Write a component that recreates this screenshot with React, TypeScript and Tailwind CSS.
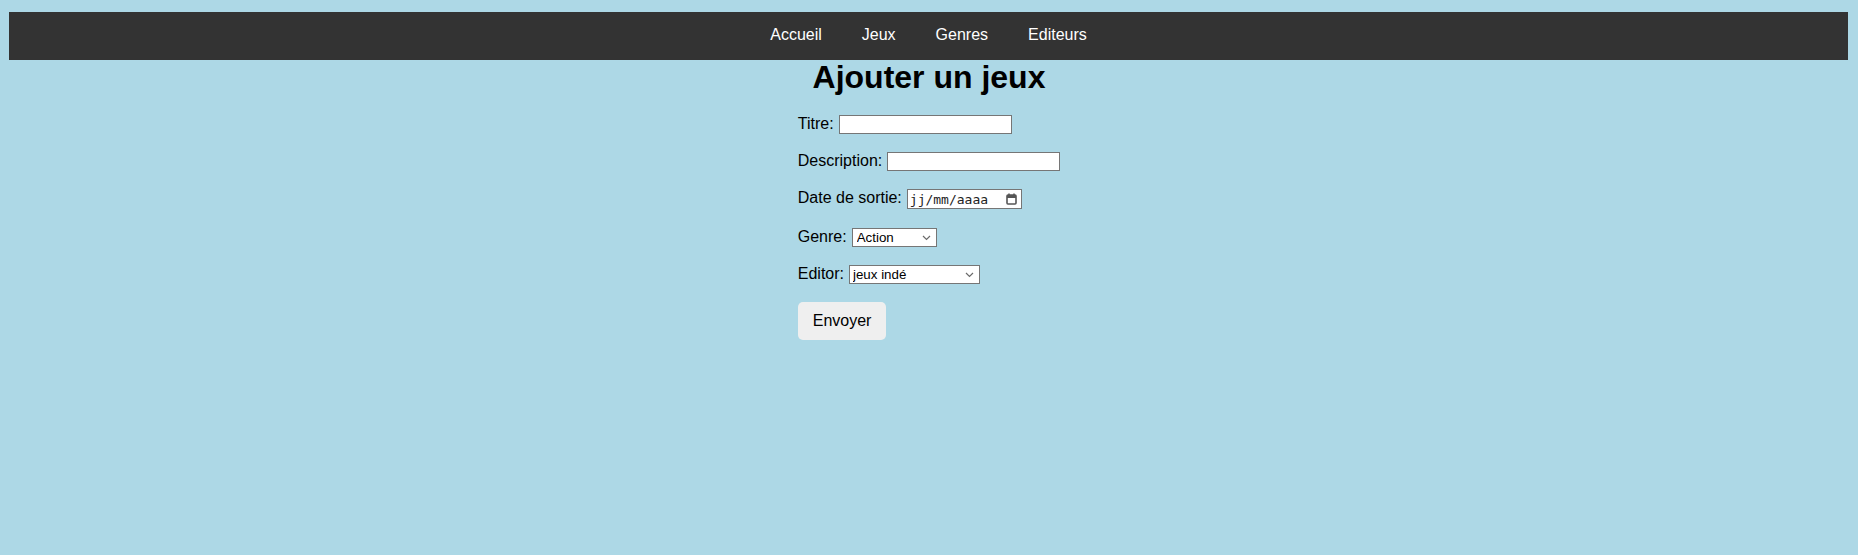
const links = ["Accueil", "Jeux", "Genres", "Editeurs"];

const Chevron = () => (
  <svg
    className="pointer-events-none absolute right-[6px] top-1/2 -translate-y-1/2"
    width="9"
    height="6"
    viewBox="0 0 9 6"
    fill="none"
  >
    <path d="M1 1l3.5 3.5L8 1" stroke="#6b6b6b" strokeWidth="1.2" />
  </svg>
);

const labelCls = "pb-[2px] text-[16px] leading-[18px]";
const inputCls =
  "block h-[19px] w-[173px] border border-[#767676] bg-white px-[2px] py-[1px] text-[13.33px] leading-[15px]";

export default function App() {
  return (
    <div className="min-h-screen bg-[#add8e6] pt-[12px] font-['Liberation_Sans',Arial,sans-serif] text-black">
      {/* Nav */}
      <nav className="ml-[9px] mr-[10px] flex h-[48px] items-center justify-center bg-[#333333]">
        {links.map((link) => (
          <a
            key={link}
            href="#"
            className="px-[20px] pb-[2px] text-[16px] leading-[18px] text-white"
          >
            {link}
          </a>
        ))}
      </nav>

      <h1 className="text-center text-[32px] font-bold leading-[34px]">Ajouter un jeux</h1>

      <div className="mt-[21px] flex justify-center">
        <form className="flex flex-col items-start gap-[18px]" onSubmit={(e) => e.preventDefault()}>
          <div className="flex h-[19px] items-center gap-[5px]">
            <label className={labelCls}>Titre:</label>
            <input type="text" className={inputCls} />
          </div>

          <div className="flex h-[19px] items-center gap-[5px]">
            <label className={labelCls}>Description:</label>
            <input type="text" className={inputCls} />
          </div>

          <div className="flex h-[20px] items-center gap-[5px]">
            <label className={labelCls}>Date de sortie:</label>
            <div className="relative flex h-[20px] w-[115px] items-center border border-[#767676] bg-white pl-[2px]">
              <span className="font-['DejaVu_Sans_Mono',monospace] text-[13px] leading-[15px] text-[#222]">
                jj/mm/aaaa
              </span>
              <svg
                className="absolute right-[4px] top-1/2 -translate-y-1/2"
                width="11"
                height="12"
                viewBox="0 0 11 12"
                fill="none"
              >
                <path d="M3 0.5v2M8 0.5v2" stroke="#555" strokeWidth="1.5" />
                <rect x="1" y="2" width="9" height="9" rx="1" stroke="#555" strokeWidth="1.6" />
                <rect x="1" y="2" width="9" height="3" fill="#555" />
              </svg>
            </div>
          </div>

          <div className="mt-[1px] flex h-[19px] items-center gap-[5px]">
            <label className={labelCls}>Genre:</label>
            <div className="relative h-[19px]">
              <select className="block h-[19px] w-[85px] appearance-none border border-[#767676] bg-white pl-[4px] text-[13.33px] leading-[15px]">
                <option>Action</option>
                <option>Aventure</option>
                <option>RPG</option>
              </select>
              <Chevron />
            </div>
          </div>

          <div className="flex h-[19px] items-center gap-[5px]">
            <label className={labelCls}>Editor:</label>
            <div className="relative h-[19px]">
              <select className="block h-[19px] w-[131px] appearance-none border border-[#767676] bg-white pl-[3px] text-[13.33px] leading-[15px]">
                <option>jeux indé</option>
              </select>
              <Chevron />
            </div>
          </div>

          <button
            type="submit"
            className="h-[38px] rounded-[5px] bg-[#efefef] px-[15px] text-[16px] leading-[18px]"
          >
            Envoyer
          </button>
        </form>
      </div>
    </div>
  );
}
